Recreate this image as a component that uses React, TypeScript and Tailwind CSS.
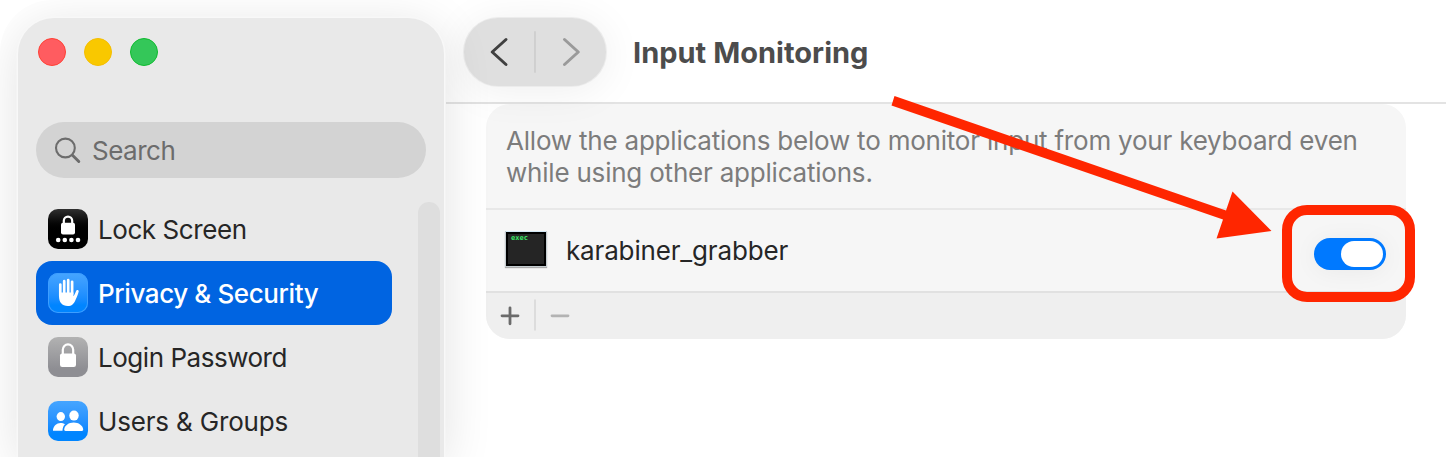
import type { ReactNode } from "react";

function Padlock({ dots = false }: { dots?: boolean }) {
  return (
    <svg viewBox="0 0 40 40" className="size-10" fill="#fff">
      {dots ? (
        <>
          <path d="M15.800 15v-3.200a4.200 4.200 0 0 1 8.400 0V15" fill="none" stroke="#fff" strokeWidth="2.200" />
          <rect x="13" y="13.800" width="14" height="11.800" rx="2" />
          {[10.2, 16.8, 23.4, 30].map((x) => (
            <circle key={x} cx={x} cy="31" r="2.300" />
          ))}
        </>
      ) : (
        <>
          <path d="M14.800 17v-4.200a5.200 5.400 0 0 1 10.400 0V17" fill="none" stroke="#fff" strokeWidth="2.200" />
          <rect x="12" y="16.400" width="16" height="13.600" rx="2.200" />
        </>
      )}
    </svg>
  );
}

function Hand() {
  return (
    <svg viewBox="0 0 40 40" className="size-10" fill="none" stroke="#fff" strokeLinecap="round" strokeLinejoin="round">
      <path d="M12.300 11.600V23M16.200 8.200V21M20.200 7.200V21M24.100 8.800V21" strokeWidth="2.700" />
      <path
        d="M11 19.500H25.400V23.200C26.700 22 27.500 19.300 28.300 17.600C29 16.400 31.100 17 30.700 18.600C29.900 21.700 28.900 24.200 27.600 26.700C26 30.800 23.700 33 19.800 33C14 33 11 29.300 11 23Z"
        fill="#fff"
        stroke="none"
      />
    </svg>
  );
}

function People() {
  return (
    <svg viewBox="0 0 40 40" className="size-10" fill="#fff">
      <ellipse cx="12.800" cy="15.600" rx="4.200" ry="4.500" />
      <path d="M5 29.800V28.800C5.500 25 8.500 22 12.500 22C14.300 22 15.800 22.500 17 23.300C15.200 25 14.500 27.200 14.500 29.800Z" />
      <ellipse cx="26" cy="14.600" rx="4.700" ry="5" />
      <path d="M16.200 28.300C16.800 24.300 20.700 21.500 25.700 21.500C30.700 21.500 34.500 24.300 35.200 28.300C35.300 29.300 34.800 29.900 33.800 29.900H17.600C16.600 29.900 16.100 29.300 16.200 28.300Z" />
    </svg>
  );
}

function NavItem({ icon, tile, label, labelClass, selected = false }: {
  icon: ReactNode;
  tile: string;
  label: string;
  labelClass: string;
  selected?: boolean;
}) {
  return (
    <li
      className={
        selected
          ? "flex h-16 items-center gap-[10px] rounded-[16px] bg-[#0064e1] pl-3 font-medium text-white"
          : "flex h-16 items-center gap-[10px] pl-3 text-[#262626]"
      }
    >
      <span className={`size-10 shrink-0 overflow-hidden rounded-[10px] ${tile}`}>{icon}</span>
      <span className={`pt-0.5 whitespace-nowrap ${labelClass}`}>{label}</span>
    </li>
  );
}

function Sidebar() {
  return (
    <aside className="z-10 mt-[18px] ml-[18px] flex w-[426px] shrink-0 flex-col rounded-t-[36px] bg-[#e9e9e9] pl-[17px] shadow-[0_0_0_1.5px_#f8f8f8,0_8px_50px_rgba(0,0,0,0.12)]">
      <div className="flex gap-[18px] pt-5 pl-[3px]">
        <span className="size-7 rounded-full border border-[#ff4035] bg-[#ff5c60]" />
        <span className="size-7 rounded-full border border-[#f4bd00] bg-[#f9c800]" />
        <span className="size-7 rounded-full border border-[#10bb30] bg-[#34c759]" />
      </div>
      <div className="mt-14 ml-px flex h-14 w-[390px] shrink-0 items-center rounded-full bg-[#d3d3d3] pl-[18px] text-[#6c6c6c]">
        <svg viewBox="0 0 28 28" className="size-7" fill="none" stroke="currentColor" strokeWidth="2.100" strokeLinecap="round">
          <circle cx="11.400" cy="12" r="9.400" />
          <path d="M18.500 19.200L24.800 25.500" strokeWidth="2.900" />
        </svg>
        <span className="ml-[10px] pt-0.5 tracking-[-0.5px]">Search</span>
      </div>
      <div className="flex grow justify-between pr-1">
        <ul className="mt-[19px] ml-px w-[356px]">
          <NavItem icon={<Padlock dots />} tile="bg-linear-to-b from-[#303030] to-[#000000] to-60%" label="Lock Screen" labelClass="tracking-[-0.43px]" />
          <NavItem icon={<Hand />} tile="bg-linear-to-b from-[#46a5ff] to-[#0085ff] to-80% shadow-[inset_0_0_0_1px_#3d9eff]" label="Privacy & Security" labelClass="tracking-[-0.4px]" selected />
          <NavItem icon={<Padlock />} tile="bg-linear-to-b from-[#b2b2b2] to-[#8e8e93] to-80%" label="Login Password" labelClass="tracking-[-0.47px]" />
          <NavItem icon={<People />} tile="bg-linear-to-b from-[#46a5ff] to-[#0085ff] to-80%" label="Users & Groups" labelClass="tracking-[-0.17px]" />
        </ul>
        <div className="mt-6 w-[22px] rounded-t-full bg-[#dedede]" />
      </div>
    </aside>
  );
}

function Toolbar() {
  return (
    <header className="flex h-[104px] items-start border-b-2 border-[#e3e3e3] pt-[18px] pl-[18px]">
      <div className="flex h-[68px] w-[142px] items-center rounded-full bg-[#dfdfdf] shadow-[0_0_0_1px_#ececec,0_4px_44px_rgba(0,0,0,0.07)]">
        <svg viewBox="0 0 142 68" className="h-[68px] w-[142px]" fill="none" strokeLinecap="round" strokeLinejoin="round" strokeWidth="3">
          <path d="M42 21.500L28.200 34L42 46.500" stroke="#404040" />
          <path d="M71 14V54" stroke="#cecece" strokeWidth="1.800" />
          <path d="M100.500 21.500L114.300 34L100.500 46.500" stroke="#9a9a9a" />
        </svg>
      </div>
      <h1 className="mt-[17px] ml-[27px] text-[29px] leading-9 font-bold tracking-[0.02px] whitespace-nowrap text-[#4c4c4c]">Input Monitoring</h1>
    </header>
  );
}

function Toggle() {
  return (
    <div className="relative mr-5 flex h-8 w-[72px] items-center justify-end rounded-full bg-[#0079ff] pr-[3px] shadow-[0_2px_24px_rgba(0,0,0,0.05)]">
      <span className="h-[26px] w-[42px] rounded-full bg-white" />
      <span className="absolute -top-[33px] -left-8 h-[97px] w-[133px] rounded-[25px] border-10 border-[#ff2600]" />
    </div>
  );
}

function ExecIcon() {
  return (
    <div className="mb-1 h-[34px] w-10 border-2 border-black bg-[#252525] pl-[3px] shadow-[0_-1px_0_0_#d3e8f5,0_0_0_1px_#c4ccd0,0_1px_1px_1px_#aaaaaa]">
      <p className="font-['DejaVu_Sans_Mono',monospace] text-[7px] leading-[9px] font-bold text-[#3be868]">exec</p>
    </div>
  );
}

function AppList() {
  return (
    <section className="ml-[40px] h-[235px] w-[920px] rounded-[24px] bg-[#f6f6f6]">
      <p className="h-[106px] border-b-2 border-[#e8e8e8] pt-[21px] pl-5 leading-8 tracking-[-0.21px] whitespace-nowrap text-[#7c7c7c]">
        Allow the applications below to monitor input from your keyboard even
        <br />
        while using other applications.
      </p>
      <div className="flex h-[83px] items-center justify-between border-b-2 border-[#e1e1e1] pl-5">
        <div className="flex items-center gap-5 text-[#262626]">
          <ExecIcon />
          <span className="tracking-[-0.16px]">karabiner_grabber</span>
        </div>
        <div className="mt-[7px]">
          <Toggle />
        </div>
      </div>
      <div className="h-[46px] rounded-b-[24px] bg-[#efefef]">
        <svg viewBox="0 0 100 46" className="h-[46px] w-[100px]" fill="none" strokeLinecap="round" strokeWidth="2.800">
          <path d="M16 22.800H32M24 14.800V30.800" stroke="#6b6b6b" />
          <path d="M49 6.500V37.500" stroke="#dcdcdc" strokeWidth="2" strokeLinecap="butt" />
          <path d="M66 22.800H82" stroke="#b3b3b3" />
        </svg>
      </div>
    </section>
  );
}

export default function App() {
  return (
    <div className="relative h-[457px] w-[1446px] overflow-hidden bg-white font-['Inter','Liberation_Sans',sans-serif] text-[26px] leading-8">
      <div className="flex h-full w-full overflow-hidden rounded-tl-[52px]">
        <Sidebar />
        <main className="ml-0.5 grow">
          <Toolbar />
          <AppList />
        </main>
      </div>
      <svg viewBox="0 0 1446 457" className="pointer-events-none absolute inset-0 z-20 h-full w-full" fill="#ff2600">
        <path d="M894.500 96L1226 210.500L1232.500 191.500L1271.500 231L1216.500 238.500L1223 219.500L891.500 105.500Z" />
      </svg>
    </div>
  );
}
